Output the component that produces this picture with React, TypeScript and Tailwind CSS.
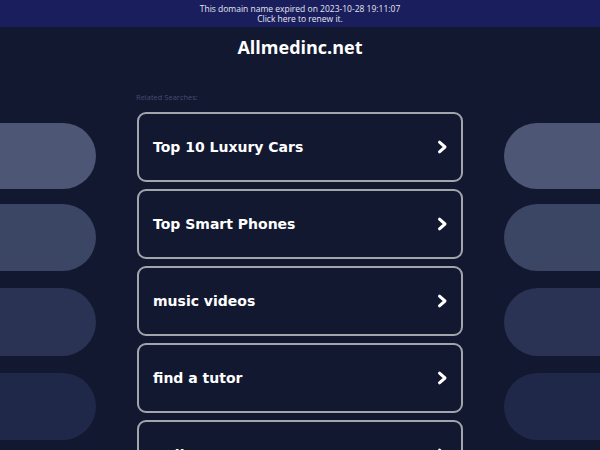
import React from "react";

const items = ["Top 10 Luxury Cars", "Top Smart Phones", "music videos", "find a tutor", "Online Degrees"];

function Chevron() {
  return (
    <svg width="12" height="16" viewBox="0 0 12 16" fill="none" className="shrink-0">
      <path d="M3.5 3.2 L9 8 L3.5 12.8" stroke="white" strokeWidth="3" strokeLinecap="round" strokeLinejoin="round" />
    </svg>
  );
}

function Pills({ side }: { side: "left" | "right" }) {
  const round = side === "left" ? "rounded-r-full" : "rounded-l-full";
  return (
    <div className="w-[96px] shrink-0 flex flex-col pt-[96px]">
      <div className={`h-[66px] bg-[#4d5775] ${round}`} />
      <div className={`h-[67px] mt-[15px] bg-[#3b4564] ${round}`} />
      <div className={`h-[68px] mt-[17px] bg-[#2a3353] ${round}`} />
      <div className={`h-[67px] mt-[17px] bg-[#1f2848] ${round}`} />
    </div>
  );
}

export default function App() {
  return (
    <div className="w-[600px] h-[450px] overflow-hidden bg-[#121830] flex flex-col">
      <div className="h-[27px] shrink-0 bg-[#1a1e5c] flex flex-col items-center justify-center text-[8.5px] leading-[10px] text-[#e5e7f0]" style={{ fontFamily: '"Open Sans", sans-serif' }}>
        <div className="font-medium">This domain name expired on 2023-10-28 19:11:07</div>
        <div className="font-medium">Click here to renew it.</div>
      </div>
      <div className="flex flex-1">
        <Pills side="left" />
        <div className="w-[326px] shrink-0 mx-[41px] flex flex-col">
          <div className="mt-[8px] h-[24px] text-center text-[18px] leading-[24px] font-bold text-white" style={{ fontFamily: '"Open Sans", sans-serif' }}>
            Allmedinc.net
          </div>
          <div className="mt-[33px] h-[10px] text-[7.5px] leading-[10px] text-[#444d70] -ml-[1px]" style={{ fontFamily: '"Open Sans", sans-serif' }}>
            Related Searches:
          </div>
          <div className="mt-[10px] flex flex-col gap-[7px]">
            {items.map((t) => (
              <div key={t} className="h-[70px] shrink-0 border-2 border-[#a3a5ad] rounded-[9px] flex items-center justify-between pl-[14px] pr-[13px]">
                <span className="text-[14px] leading-[16px] font-bold text-white" style={{ fontFamily: '"DejaVu Sans", sans-serif' }}>{t}</span>
                <Chevron />
              </div>
            ))}
          </div>
        </div>
        <Pills side="right" />
      </div>
    </div>
  );
}
